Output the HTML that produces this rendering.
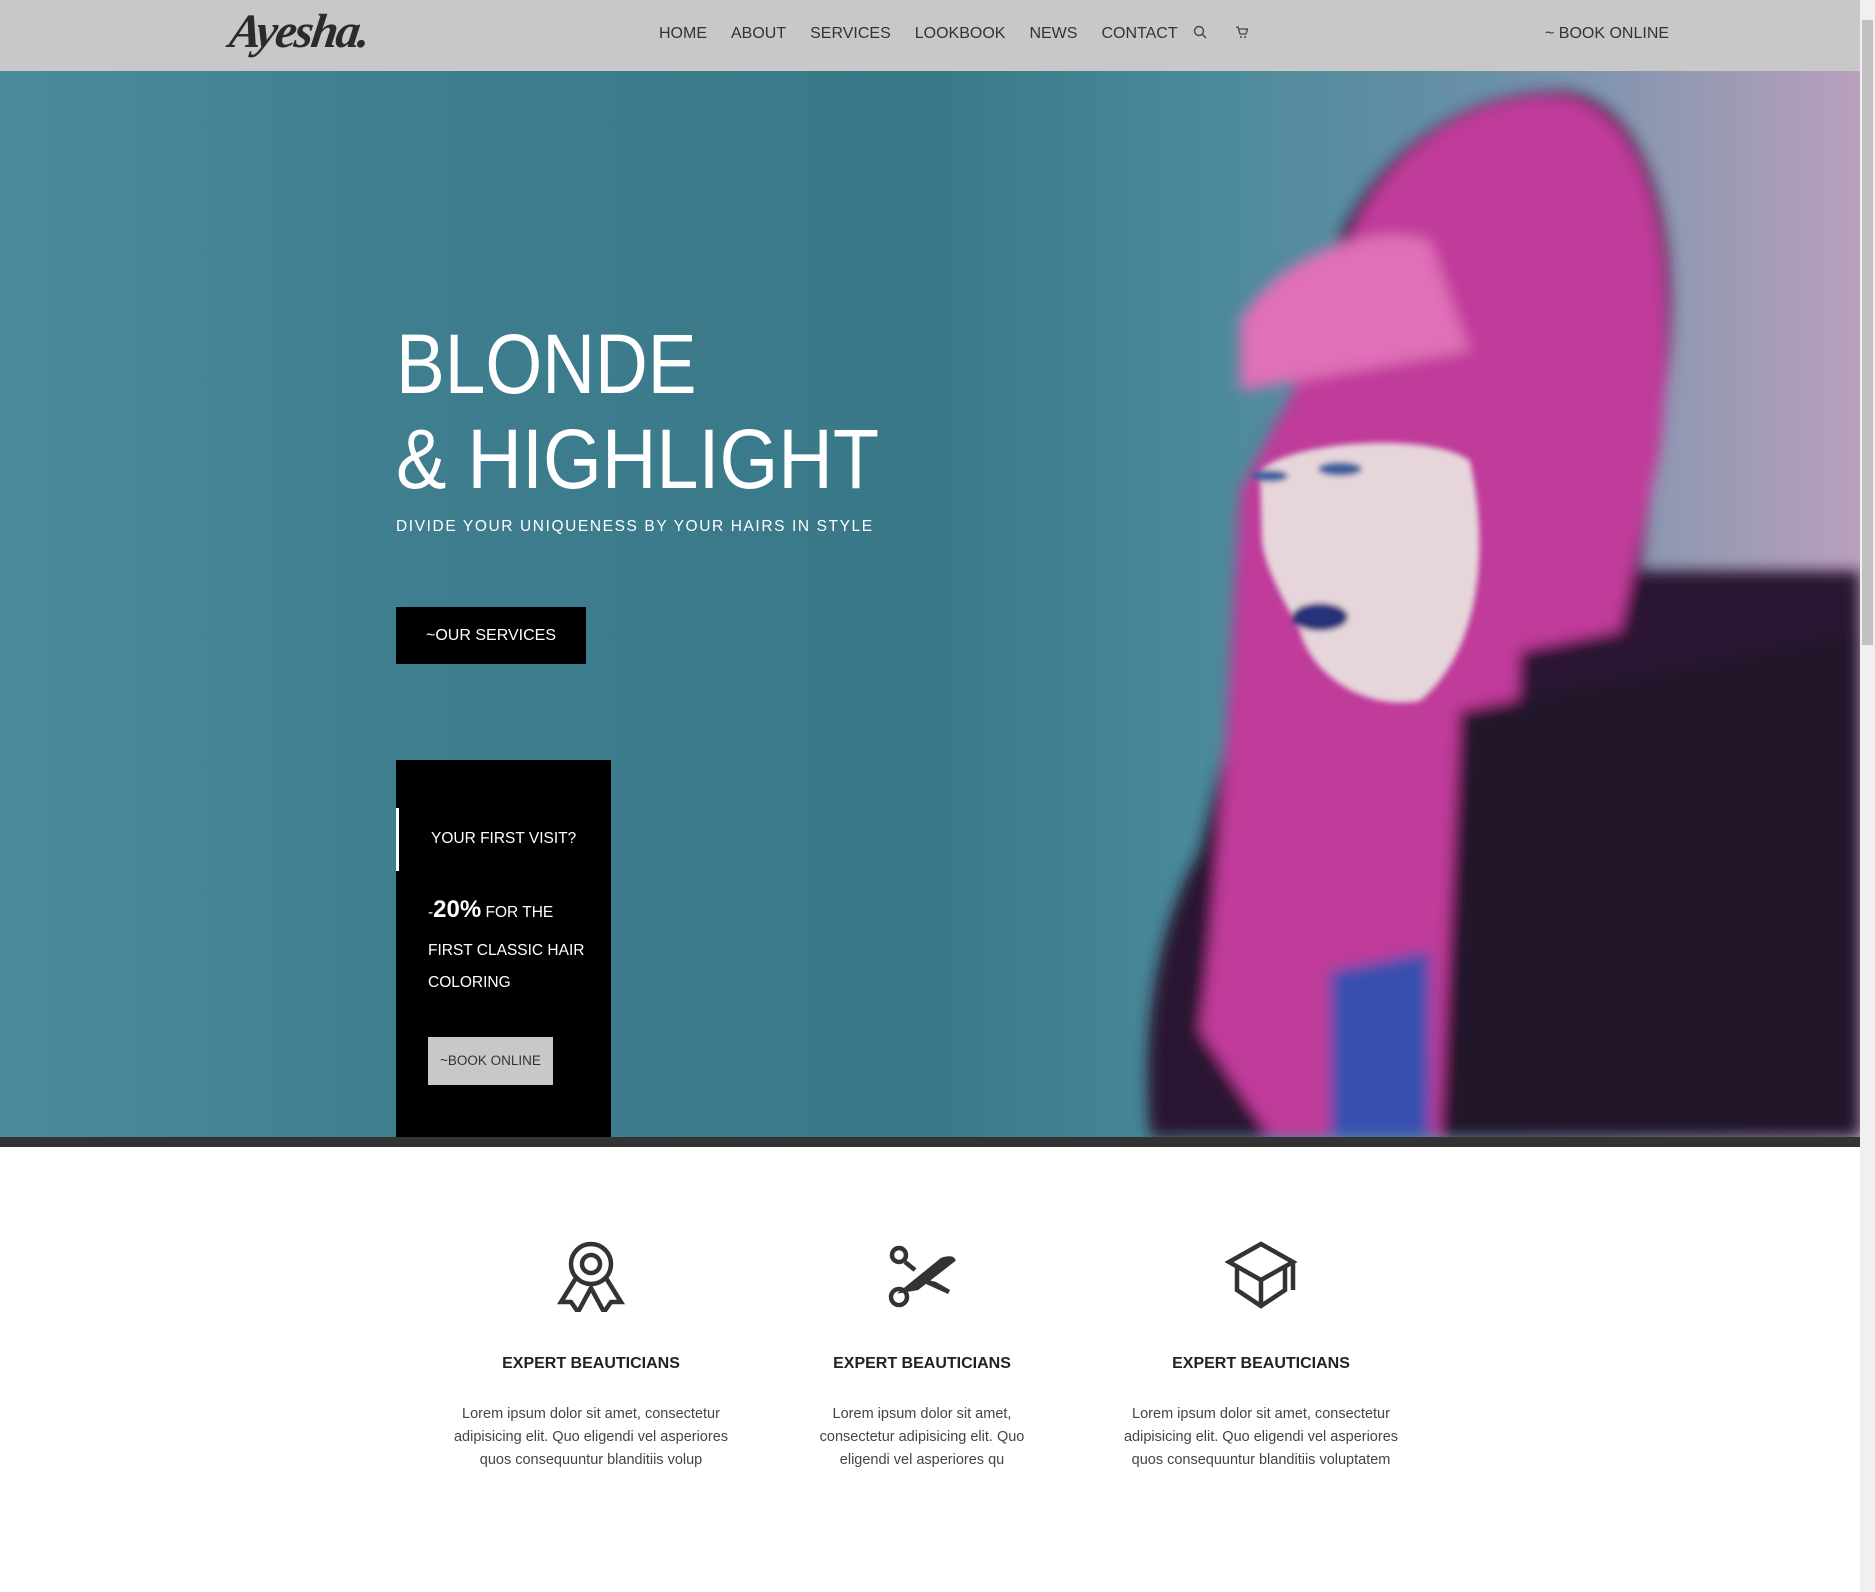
<!DOCTYPE html>
<html><head><meta charset="utf-8">
<style>
*{margin:0;padding:0;box-sizing:border-box}
body{width:1875px;height:1592px;overflow:hidden;background:#fff;font-family:"Liberation Sans",sans-serif;position:relative}
.nav{position:absolute;left:0;top:0;width:1860px;height:71px;background:#c8c8c8}
.logo{position:absolute;left:230px;top:4px;font-family:"Liberation Serif",serif;font-style:italic;font-weight:bold;font-size:48px;color:#2b2b2b;letter-spacing:-2px;transform:skewX(-8deg)}
.menu{position:absolute;top:25px;font-size:16px;color:#333;display:flex}
.menu span{margin-right:24px}
.hero{position:absolute;left:0;top:71px;width:1860px;height:1066px;overflow:hidden;background:linear-gradient(90deg,#4a8c9c 0%,#3d7d8d 25%,#3a7888 50%,#4a8a9a 65%,#6a90a8 80%,#b9a0bd 100%)}
.bar{position:absolute;left:0;top:1137px;width:1860px;height:10px;background:#333}
.h1{position:absolute;left:396px;color:#fff;font-size:84px;font-weight:normal;white-space:nowrap;transform-origin:left top}
.sub{position:absolute;left:396px;top:447px;color:#fff;font-size:15.5px;letter-spacing:1.6px}
.btn1{position:absolute;left:396px;top:536px;width:190px;height:57px;background:#000;color:#fff;font-size:16px;text-align:center;line-height:57px}
.box{position:absolute;left:396px;top:760px;width:215px;height:377px;background:#000;color:#fff}
.box .wb{position:absolute;left:0;top:48px;width:3px;height:63px;background:#fff}
.btn2{position:absolute;left:32px;top:277px;width:125px;height:48px;background:#c8c8c8;color:#333;font-size:13.5px;text-align:center;line-height:48px}
.scroll{position:absolute;left:1860px;top:0;width:15px;height:1592px;background:#f0f0f0}
.thumb{position:absolute;left:1862px;top:20px;width:11px;height:625px;background:#c1c1c1}
.feat{position:absolute;top:1240px;width:320px;text-align:center;color:#333}
.feat h3{margin-top:38px;font-size:16px;font-weight:bold;color:#222}
.feat p{margin:30px auto 0;width:296px;font-size:14.5px;line-height:23px;color:#444}
</style></head><body>
<div class="nav">
<div class="logo">Ayesha.</div>
<div class="menu" style="left:659px"><span>HOME</span><span>ABOUT</span><span>SERVICES</span><span>LOOKBOOK</span><span>NEWS</span><span>CONTACT</span></div>
<svg style="position:absolute;left:1193px;top:25px" width="14" height="14" viewBox="0 0 14 14"><circle cx="6" cy="6" r="4.5" fill="none" stroke="#444" stroke-width="1.4"/><path d="M9.5 9.5L13 13" stroke="#444" stroke-width="1.4"/></svg>
<svg style="position:absolute;left:1235px;top:25px" width="14" height="14" viewBox="0 0 14 14"><path d="M1 2h2l2 7h6l1.5-5H4" fill="none" stroke="#444" stroke-width="1.3"/><circle cx="6" cy="12" r="1" fill="#444"/><circle cx="10" cy="12" r="1" fill="#444"/></svg>
<div class="menu" style="left:1545px"><span>~ BOOK ONLINE</span></div>
</div>
<div class="hero">
<svg width="1860" height="1066" style="position:absolute;left:0;top:0">
<defs><filter id="b"><feGaussianBlur stdDeviation="7"/></filter><filter id="b2"><feGaussianBlur stdDeviation="3"/></filter></defs>
<g filter="url(#b)">
<path d="M1320 300 C1300 150 1420 20 1560 20 C1660 25 1690 200 1660 350 L1640 500 L1860 500 L1860 1066 L1150 1066 C1140 950 1160 850 1200 780 Z" fill="#2a1530"/>
<path d="M1330 250 C1340 110 1450 20 1560 25 C1660 40 1680 200 1660 380 L1620 560 L1520 580 L1500 1066 L1270 1066 L1200 960 C1220 800 1230 600 1240 420 Z" fill="#c03a9a"/>
<path d="M1240 250 C1280 180 1380 150 1430 170 L1470 280 L1240 320 Z" fill="#e070b8"/>
<path d="M1330 900 L1430 880 L1430 1066 L1330 1066 Z" fill="#3850b0"/>
<path d="M1460 640 L1860 560 L1860 1066 L1440 1066 Z" fill="#24142a"/>
</g>
<g filter="url(#b2)">
<path d="M1260 400 C1290 370 1430 360 1470 390 C1490 480 1480 580 1420 630 C1360 640 1310 600 1300 560 C1290 540 1265 500 1262 470 Z" fill="#e6d6dc"/>
<ellipse cx="1320" cy="546" rx="28" ry="14" fill="#28307a"/>
<ellipse cx="1270" cy="405" rx="18" ry="6" fill="#3a60a0"/>
<ellipse cx="1340" cy="398" rx="22" ry="7" fill="#3a60a0"/>
</g>
</svg>
<div class="h1" style="top:245px;transform:scaleX(0.87)">BLONDE</div>
<div class="h1" style="top:340px;transform:scaleX(0.9)">&amp; HIGHLIGHT</div>
<div class="sub">DIVIDE YOUR UNIQUENESS BY YOUR HAIRS IN STYLE</div>
<div class="btn1">~OUR SERVICES</div>
</div>
<div class="bar"></div>
<div class="box">
<div class="wb"></div>
<div style="position:absolute;left:35px;top:70px;font-size:15.5px">YOUR FIRST VISIT?</div>
<div style="position:absolute;left:32px;top:136px;font-size:15.5px">-<b style="font-size:24px">20%</b> FOR THE</div>
<div style="position:absolute;left:32px;top:182px;font-size:15.5px">FIRST CLASSIC HAIR</div>
<div style="position:absolute;left:32px;top:214px;font-size:15.5px">COLORING</div>
<div class="btn2">~BOOK ONLINE</div>
</div>
<div class="feat" style="left:431px">
<svg width="70" height="72" viewBox="0 0 70 72" fill="none" stroke="#333" stroke-width="4.5"><circle cx="35" cy="24" r="20"/><circle cx="35" cy="24" r="9"/><path d="M20 38L5 62h10l7 10 13-24 13 24 7-10h10L50 38"/></svg>
<h3>EXPERT BEAUTICIANS</h3>
<p>Lorem ipsum dolor sit amet, consectetur adipisicing elit. Quo eligendi vel asperiores quos consequuntur blanditiis volup</p>
</div>
<div class="feat" style="left:762px">
<svg width="70" height="72" viewBox="0 0 70 72" fill="none" stroke="#333" stroke-width="4.5"><circle cx="12" cy="15" r="7"/><circle cx="12" cy="57" r="8"/><path d="M18 22L28 30"/><path d="M18 50L55 20C60 18 65 18 66 20L30 48Z" fill="#333"/><path d="M40 42L62 52L48 44Z" fill="#333"/></svg>
<h3>EXPERT BEAUTICIANS</h3>
<p style="width:250px">Lorem ipsum dolor sit amet, consectetur adipisicing elit. Quo eligendi vel asperiores qu</p>
</div>
<div class="feat" style="left:1101px">
<svg width="76" height="72" viewBox="0 0 76 72" fill="none" stroke="#333" stroke-width="4.5"><path d="M38 4L70 22L38 40L6 22Z"/><path d="M14 27V50L38 66L62 50V27"/><path d="M38 40V66"/><path d="M70 22V50"/></svg>
<h3>EXPERT BEAUTICIANS</h3>
<p>Lorem ipsum dolor sit amet, consectetur adipisicing elit. Quo eligendi vel asperiores quos consequuntur blanditiis voluptatem</p>
</div>
<div class="scroll"></div><div class="thumb"></div>
</body></html>
